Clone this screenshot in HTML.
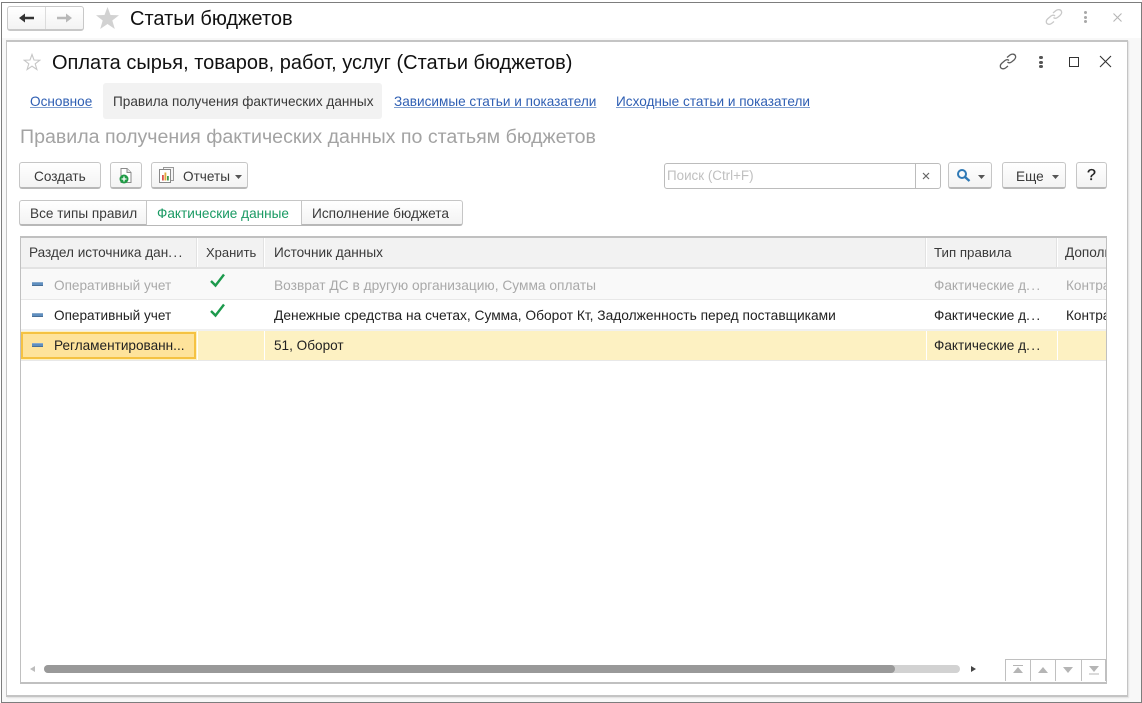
<!DOCTYPE html>
<html><head><meta charset="utf-8">
<style>
html,body{margin:0;padding:0;background:#fff}
#p{position:relative;width:1142px;height:703px;overflow:hidden;background:#fff;font-family:"Liberation Sans",Arial,sans-serif;font-size:13.6px;color:#3a3a3a;filter:blur(.35px)}
#p div,#p span.t,#p svg{position:absolute}
.t{white-space:nowrap;line-height:16px}
.b{box-sizing:border-box;border:1px solid #c6c6c6;border-bottom:2px solid #b8b8b8;border-radius:3px;background:linear-gradient(#fff,#f3f3f3)}
.l{color:#2f5fb3;text-decoration:underline;text-decoration-color:#7f9fd0;font-size:13.6px}
.e{letter-spacing:1.4px}
</style></head><body>
<div id="p">
<!-- outer frame -->
<div style="left:1px;top:2px;width:1139px;height:699px;border:1px solid #7d7d7d;background:#f8f8f8"></div>
<div style="left:2px;top:3px;width:1139px;height:35px;background:#fff"></div>
<!-- top nav -->
<div class="b" style="left:7px;top:6px;width:77px;height:25px;border-color:#c8c8c8"></div>
<div style="left:45px;top:7px;width:1px;height:22px;background:#dcdcdc"></div>
<svg style="left:18px;top:11px" width="18" height="14" viewBox="0 0 18 14"><path d="M1 7 L7 2.500 V5.800 H16 V8.200 H7 V11.500 Z" fill="#333"/></svg>
<svg style="left:55px;top:11px" width="18" height="14" viewBox="0 0 18 14"><path d="M17 7 L11 2.500 V5.800 H2 V8.200 H11 V11.500 Z" fill="#b8b8b8"/></svg>
<svg style="left:95px;top:6px" width="25" height="24" viewBox="0 0 25 24"><path d="M12.500 1 L15.500 9 L24 9.300 L17.300 14.500 L19.800 23 L12.500 18 L5.200 23 L7.700 14.500 L1 9.300 L9.500 9 Z" fill="#d2d2d2"/></svg>
<span class="t" style="left:130px;top:8px;font-size:20px;line-height:22px;color:#111">Статьи бюджетов</span>
<svg style="left:1044px;top:8px" width="20" height="18" viewBox="0 0 20 18" fill="none" stroke="#c9c9c9" stroke-width="1.300"><path d="M9 5 L12 2.500 C14 1 17 1.500 17.500 3.500 C18 5 17 6.500 16 7.500 L13.500 9.500 C12 10.500 10.500 10.500 9.500 9.500"/><path d="M11 8 C10 7 8.500 7 7 8 L3.500 11 C2 12.500 2 14.500 3 15.500 C4.500 16.800 6 16.500 7.500 15.500 L10 13.500"/></svg>
<div style="left:1084px;top:11px;width:3px;height:3px;background:#a8a8a8;border-radius:2px"></div>
<div style="left:1084px;top:16px;width:3px;height:3px;background:#a8a8a8;border-radius:2px"></div>
<div style="left:1084px;top:20px;width:3px;height:3px;background:#a8a8a8;border-radius:2px"></div>
<svg style="left:1112px;top:12px" width="11" height="11" viewBox="0 0 11 11" stroke="#b5b5b5" stroke-width="1.100"><path d="M1.500 1.500 L9.500 9.500 M9.500 1.500 L1.500 9.500"/></svg>

<!-- window -->
<div style="left:6px;top:40px;width:1120px;height:653px;border:1px solid #c4c4c4;border-top:2px solid #c4c4c4;border-bottom:2px solid #c4c4c4;background:#fff;box-shadow:1px 1px 1px #e0e0e0"></div>
<svg style="left:23px;top:53px" width="18" height="18" viewBox="0 0 18 18"><path d="M9 1.500 L11 7 L16.800 7.200 L12.200 10.800 L13.900 16.500 L9 13.200 L4.100 16.500 L5.800 10.800 L1.200 7.200 L7 7 Z" fill="#fff" stroke="#c6c6c6" stroke-width="1.100"/></svg>
<span class="t" style="left:52px;top:52px;font-size:20px;line-height:22px;color:#111">Оплата сырья, товаров, работ, услуг (Статьи бюджетов)</span>
<svg style="left:998px;top:52px" width="20" height="19" viewBox="0 0 20 19" fill="none" stroke="#5c5c5c" stroke-width="1.300"><path d="M9 5.500 L12 3 C14 1.500 17 2 17.500 4 C18 5.500 17 7 16 8 L13.500 10 C12 11 10.500 11 9.500 10"/><path d="M11 8.500 C10 7.500 8.500 7.500 7 8.500 L3.500 11.500 C2 13 2 15 3 16 C4.500 17.300 6 17 7.500 16 L10 14"/></svg>
<div style="left:1039px;top:56px;width:4px;height:3px;background:#555;border-radius:2px"></div>
<div style="left:1039px;top:61px;width:4px;height:3px;background:#555;border-radius:2px"></div>
<div style="left:1039px;top:65px;width:4px;height:3px;background:#555;border-radius:2px"></div>
<div style="left:1069px;top:57px;width:8px;height:8px;border:1.500px solid #333"></div>
<svg style="left:1099px;top:55px" width="13" height="13" viewBox="0 0 13 13" stroke="#333" stroke-width="1.100"><path d="M1 1 L12 12 M12 1 L1 12"/></svg>

<!-- tabs -->
<span class="t l" style="left:30px;top:94px">Основное</span>
<div style="left:103px;top:83px;width:279px;height:36px;background:#f2f2f2;border-radius:3px"></div>
<span class="t" style="left:113px;top:94px">Правила получения фактических данных</span>
<span class="t l" style="left:394px;top:94px">Зависимые статьи и показатели</span>
<span class="t l" style="left:616px;top:94px">Исходные статьи и показатели</span>
<span class="t" style="left:20px;top:126px;font-size:19.6px;line-height:22px;color:#a3a3a3">Правила получения фактических данных по статьям бюджетов</span>

<!-- toolbar -->
<div class="b" style="left:19px;top:162px;width:82px;height:27px"></div>
<span class="t" style="left:34px;top:169px">Создать</span>
<div class="b" style="left:110px;top:162px;width:32px;height:27px"></div>
<svg style="left:117px;top:167px" width="18" height="18" viewBox="0 0 18 18"><path d="M4 1.500 H10 L14 5.500 V15.500 H4 Z" fill="#fff" stroke="#8a8a8a"/><path d="M10 1.500 V5.500 H14" fill="#e8e8e8" stroke="#8a8a8a"/><circle cx="7" cy="12" r="4.500" fill="#1f9a45"/><path d="M4.500 12 H9.500 M7 9.500 V14.500" stroke="#fff" stroke-width="1.300"/></svg>
<div class="b" style="left:151px;top:162px;width:97px;height:27px"></div>
<svg style="left:157px;top:166px" width="20" height="19" viewBox="0 0 20 19"><rect x="6.500" y="1.500" width="10" height="13" fill="#f4f4f4" stroke="#999"/><rect x="2.500" y="3.500" width="11" height="13" fill="#fff" stroke="#888"/><rect x="5" y="9" width="1.800" height="5.500" fill="#d9534f"/><rect x="7.500" y="6.500" width="1.800" height="8" fill="#e2a93b"/><rect x="10" y="10" width="1.800" height="4.500" fill="#3f9a4d"/></svg>
<span class="t" style="left:183px;top:169px">Отчеты</span>
<svg style="left:235px;top:175px" width="7" height="4"><path d="M0 0 H7 L3.500 4 Z" fill="#555"/></svg>

<!-- search -->
<div style="left:664px;top:163px;width:275px;height:24px;border:1px solid #bcbcbc;border-radius:3px;background:#fff"></div>
<div style="left:915px;top:164px;width:1px;height:24px;background:#bcbcbc"></div>
<span class="t" style="left:667px;top:168px;color:#c0c0c0;font-size:13.4px">Поиск (Ctrl+F)</span>
<svg style="left:922px;top:172px" width="8" height="8" viewBox="0 0 8 8" stroke="#666" stroke-width="1.200"><path d="M1 1 L7 7 M7 1 L1 7"/></svg>
<div class="b" style="left:948px;top:162px;width:44px;height:27px"></div>
<svg style="left:956px;top:168px" width="15" height="15" viewBox="0 0 15 15" fill="none" stroke="#2f79b5" stroke-width="2"><circle cx="6" cy="6" r="4"/><path d="M9 9 L13.500 13" stroke-width="2.400"/></svg>
<svg style="left:978px;top:175px" width="7" height="4"><path d="M0 0 H7 L3.500 4 Z" fill="#555"/></svg>
<div class="b" style="left:1002px;top:162px;width:64px;height:27px"></div>
<span class="t" style="left:1016px;top:169px">Еще</span>
<svg style="left:1052px;top:175px" width="7" height="4"><path d="M0 0 H7 L3.500 4 Z" fill="#555"/></svg>
<div class="b" style="left:1076px;top:162px;width:31px;height:27px"></div>
<span class="t" style="left:1087px;top:168px;font-size:16px;color:#222;-webkit-text-stroke:.3px #222">?</span>

<!-- filter tabs -->
<div class="b" style="left:19px;top:200px;width:444px;height:26px"></div>
<div style="left:146px;top:201px;width:154px;height:24px;background:#fff;border-left:1px solid #c6c6c6;border-right:1px solid #c6c6c6"></div>
<span class="t" style="left:30px;top:206px">Все типы правил</span>
<span class="t" style="left:157px;top:206px;color:#1a9a63">Фактические данные</span>
<span class="t" style="left:312px;top:206px;font-size:13.7px">Исполнение бюджета</span>

<!-- table -->
<div style="left:20px;top:236px;width:1085px;height:444px;border:1px solid #c0c0c0;border-top:2px solid #c0c0c0;border-bottom:2px solid #c0c0c0;background:#fff"></div>
<div style="left:21px;top:238px;width:1085px;height:29px;background:#f2f2f2"></div>
<div style="left:21px;top:267px;width:1085px;height:2px;background:#e2e2e2"></div>
<div style="left:197px;top:238px;width:1px;height:29px;background:#fff;box-shadow:-1px 0 0 #e2e2e2"></div>
<div style="left:264px;top:238px;width:1px;height:29px;background:#fff;box-shadow:-1px 0 0 #e2e2e2"></div>
<div style="left:926px;top:238px;width:1px;height:29px;background:#fff;box-shadow:-1px 0 0 #e2e2e2"></div>
<div style="left:1057px;top:238px;width:1px;height:29px;background:#fff;box-shadow:-1px 0 0 #e2e2e2"></div>
<span class="t" style="left:29px;top:245px">Раздел источника дан<span class="e">...</span></span>
<span class="t" style="left:206px;top:245px;font-size:13px">Хранить</span>
<span class="t" style="left:274px;top:245px">Источник данных</span>
<span class="t" style="left:934px;top:245px;font-size:13.3px">Тип правила</span>
<div style="left:1065px;top:245px;width:41px;height:16px;overflow:hidden"><span class="t" style="left:0;top:0">Дополнит</span></div>

<!-- rows -->
<div style="left:21px;top:269px;width:1085px;height:30px;background:#f9f9f9"></div>
<div style="left:21px;top:299px;width:1085px;height:1px;background:#e8e8e8"></div>
<div style="left:21px;top:329px;width:1085px;height:2px;background:#f0f0f0"></div>
<div style="left:21px;top:331px;width:1085px;height:29px;background:#fdf1c2"></div>
<div style="left:21px;top:360px;width:1085px;height:1px;background:#e8e8e8"></div>
<div style="left:197px;top:331px;width:1px;height:29px;background:#fff"></div>
<div style="left:264px;top:331px;width:1px;height:29px;background:#fff"></div>
<div style="left:926px;top:331px;width:1px;height:29px;background:#fff"></div>
<div style="left:1057px;top:331px;width:1px;height:29px;background:#fff"></div>
<div style="box-sizing:border-box;left:21px;top:332px;width:175px;height:27px;background:#fee39b;border:2px solid #f5c242"></div>

<div style="left:32px;top:282px;width:11px;height:4px;background:#5f8fc0;border-top:1px solid #86a8cb;border-bottom:1px solid #4a6f96;box-sizing:border-box"></div>
<div style="left:32px;top:313px;width:11px;height:4px;background:#5f8fc0;border-top:1px solid #86a8cb;border-bottom:1px solid #4a6f96;box-sizing:border-box"></div>
<div style="left:32px;top:343px;width:11px;height:4px;background:#5f8fc0;border-top:1px solid #86a8cb;border-bottom:1px solid #4a6f96;box-sizing:border-box"></div>

<span class="t" style="left:54px;top:278px;color:#a9a9a9">Оперативный учет</span>
<svg style="left:209px;top:273px" width="17" height="15" viewBox="0 0 17 15" fill="none" stroke="#1c9a4c" stroke-width="2.400"><path d="M2 8 L6.500 12.500 L15 1.500"/></svg>
<span class="t" style="left:274px;top:278px;color:#a9a9a9;font-size:13.75px">Возврат ДС в другую организацию, Сумма оплаты</span>
<span class="t" style="left:934px;top:278px;color:#a9a9a9">Фактические д<span class="e">...</span></span>
<div style="left:1066px;top:278px;width:40px;height:16px;overflow:hidden"><span class="t" style="left:0;top:0;color:#a9a9a9">Контрагент</span></div>

<span class="t" style="left:54px;top:308px;color:#222">Оперативный учет</span>
<svg style="left:209px;top:303px" width="17" height="15" viewBox="0 0 17 15" fill="none" stroke="#1c9a4c" stroke-width="2.400"><path d="M2 8 L6.500 12.500 L15 1.500"/></svg>
<span class="t" style="left:274px;top:308px;color:#222;font-size:13.78px">Денежные средства на счетах, Сумма, Оборот Кт, Задолженность перед поставщиками</span>
<span class="t" style="left:934px;top:308px;color:#222">Фактические д<span class="e">...</span></span>
<div style="left:1066px;top:308px;width:40px;height:16px;overflow:hidden"><span class="t" style="left:0;top:0;color:#222">Контрагент</span></div>

<span class="t" style="left:54px;top:338px;color:#222">Регламентированн...</span>
<span class="t" style="left:274px;top:338px;color:#222">51, Оборот</span>
<span class="t" style="left:934px;top:338px;color:#222">Фактические д<span class="e">...</span></span>

<!-- scrollbar -->
<svg style="left:30px;top:666px" width="5" height="6"><path d="M5 0 V6 L0 3 Z" fill="#bdbdbd"/></svg>
<div style="left:44px;top:665px;width:916px;height:8px;background:#d2d2d2;border-radius:4px"></div>
<div style="left:44px;top:665px;width:851px;height:8px;background:#999;border-radius:4px"></div>
<svg style="left:971px;top:666px" width="5" height="6"><path d="M0 0 V6 L5 3 Z" fill="#444"/></svg>

<div style="left:1005px;top:659px;width:101px;height:22px;border:1px solid #c0c0c0;border-bottom:0;box-sizing:border-box;background:#fff"></div>
<div style="left:1030px;top:659px;width:1px;height:22px;background:#c0c0c0"></div>
<div style="left:1055px;top:659px;width:1px;height:22px;background:#c0c0c0"></div>
<div style="left:1081px;top:659px;width:1px;height:22px;background:#c0c0c0"></div>
<svg style="left:1012px;top:665px" width="12" height="10"><path d="M1 0.500 H11" stroke="#b5b5b5"/><path d="M6 2 L11 8 H1 Z" fill="#b5b5b5"/></svg>
<svg style="left:1037px;top:667px" width="12" height="7"><path d="M6 0 L11 6 H1 Z" fill="#b5b5b5"/></svg>
<svg style="left:1062px;top:667px" width="12" height="7"><path d="M1 0 H11 L6 6 Z" fill="#b5b5b5"/></svg>
<svg style="left:1088px;top:665px" width="12" height="10"><path d="M1 1 H11 L6 7 Z" fill="#b5b5b5"/><path d="M1 9 H11" stroke="#b5b5b5"/></svg>
</div>
</body></html>
